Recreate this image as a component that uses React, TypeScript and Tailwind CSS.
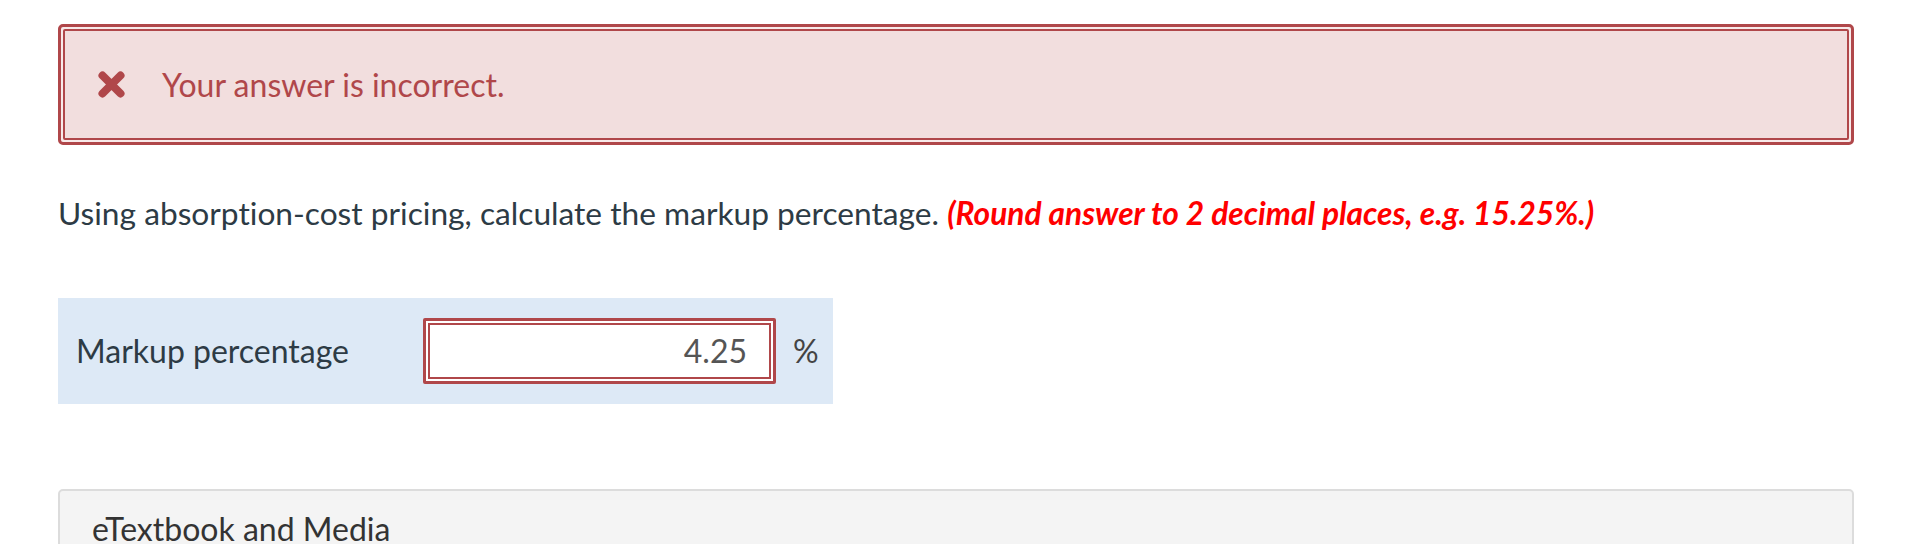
import React from "react";

const CrossIcon = () => (
    <svg width="29" height="29" viewBox="0 0 29 29" className="shrink-0">
        <path
            d="M5.5 5.5 L23.5 23.5 M23.5 5.5 L5.5 23.5"
            stroke="#b0474a"
            strokeWidth="8"
            strokeLinecap="round"
        />
    </svg>
);

const App = () => {
    return (
        <div className="min-h-screen bg-white pl-[58px] pr-[60px] pt-[24px] font-['Lato',sans-serif] text-[32px] text-[#2d3b45] [font-variant-ligatures:none]">
            {/* feedback alert */}
            <div className="rounded-[5px] border-[3px] border-[#b0474a] bg-[#f8eaea] p-[2px]">
                <div className="flex h-[111px] items-center gap-[36px] rounded-[2px] border-2 border-[#b0474a] bg-[#f2dede] pl-[32px]">
                    <CrossIcon />
                    <span className="text-[#b0474a]">Your answer is incorrect.</span>
                </div>
            </div>

            <p className="mt-[47px] text-[31.7px] leading-[42px]">
                Using absorption-cost pricing, calculate the markup percentage.{" "}
                <span className="font-bold italic text-[#ff0000]">
                    (Round answer to 2 decimal places, e.g. 15.25%.)
                </span>
            </p>

            {/* answer row */}
            <div className="mt-[64px] flex h-[106px] w-[775px] items-center bg-[#dde9f6] pl-[18px]">
                <span className="w-[347px]">Markup percentage</span>
                <div className="rounded-[2px] border-[3px] border-[#b0474a] bg-white p-[2px]">
                    <div className="flex h-[56px] w-[343px] items-center justify-end border-2 border-[#b0474a] pr-[22px] text-[#555]">
                        4.25
                    </div>
                </div>
                <span className="ml-[17px] text-[#444]">%</span>
            </div>

            <div className="mt-[85px] rounded-[5px] border-2 border-[#dcdcdc] bg-[#f4f4f4] px-[32px] pt-[14px] pb-[30px] text-[#333]">
                eTextbook and Media
            </div>
        </div>
    );
};

export default App;
